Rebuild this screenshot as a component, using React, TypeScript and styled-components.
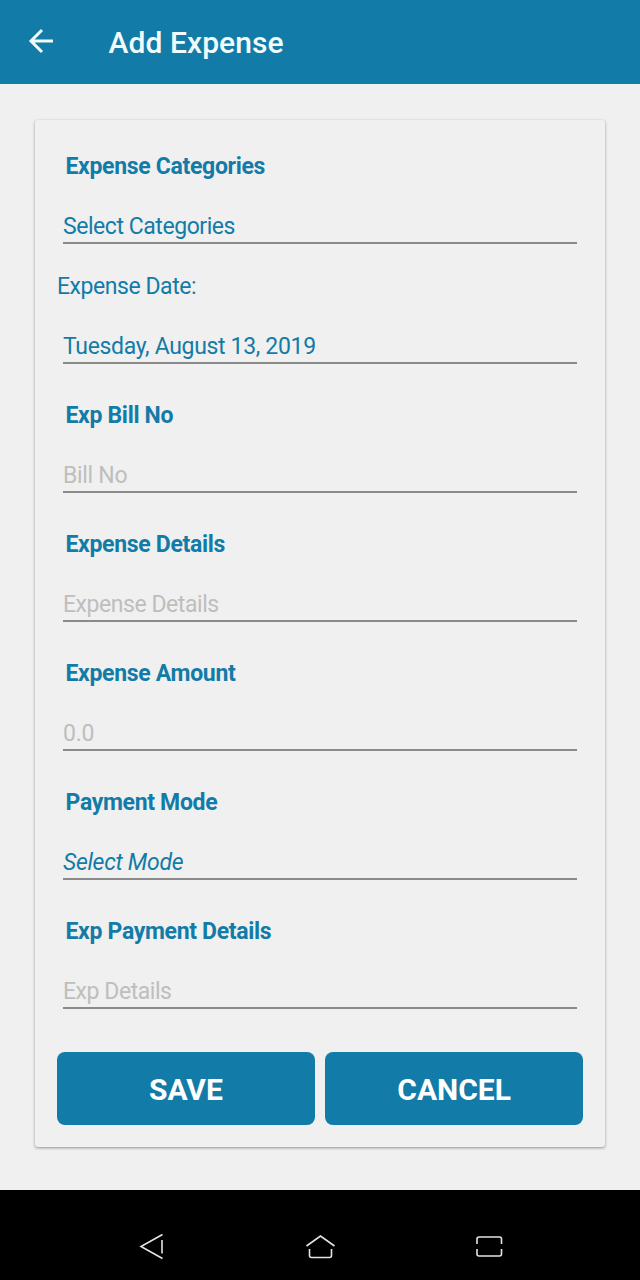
import React from 'react';
import styled, { createGlobalStyle } from 'styled-components';

const BLUE = '#137ba7';

const GlobalStyle = createGlobalStyle`
  * { box-sizing: border-box; }
  body { margin: 0; background: #f0f0f0; font-family: Roboto, sans-serif; }
`;

const Screen = styled.div`
  width: 640px;
  height: 1280px;
  display: flex;
  flex-direction: column;
  background: #f0f0f0;
  overflow: hidden;
`;

const AppBar = styled.header`
  height: 84px;
  flex: none;
  display: flex;
  align-items: center;
  padding: 0 0 0 28px;
  background: ${BLUE};
  color: #f1fbfd;
`;

const BackIcon = styled.svg`
  width: 26px;
  height: 26px;
  margin-top: -2px;
`;

const Title = styled.h1`
  margin: 2px 0 0 54.5px;
  font-size: 30px;
  line-height: 36px;
  font-weight: 500;
  letter-spacing: 0.08px;
`;

const Content = styled.main`
  flex: 1;
  padding: 36px 35px 0;
`;

const Card = styled.form`
  height: 1027px;
  padding: 0 22px;
  border-radius: 3px;
  background: #f0f0f0;
  box-shadow: 0 1px 3px rgba(0, 0, 0, 0.4);
  display: flex;
  flex-direction: column;
`;

const Field = styled.div<{ $compact?: boolean }>`
  height: ${(p) => (p.$compact ? 120 : 129)}px;
  flex: none;
  display: flex;
  flex-direction: column;
  justify-content: flex-end;
  padding: 0 6px 5px;
`;

const Label = styled.label<{ $plain?: boolean }>`
  margin: ${(p) => (p.$plain ? '0 0 33px -6px' : '0 0 33px 2.5px')};
  font-size: 23px;
  line-height: 27px;
  letter-spacing: ${(p) => (p.$plain ? -0.45 : -0.32)}px;
  font-weight: ${(p) => (p.$plain ? 400 : 700)};
  color: ${BLUE};
`;

const Value = styled.div<{ $hint?: boolean; $italic?: boolean; $tracking?: number }>`
  height: 31px;
  border-bottom: 2px solid #8a8a8a;
  font-size: 23px;
  line-height: 27px;
  letter-spacing: ${(p) => p.$tracking ?? -0.45}px;
  font-style: ${(p) => (p.$italic ? 'italic' : 'normal')};
  color: ${(p) => (p.$hint ? '#bebebe' : BLUE)};
`;

const Actions = styled.div`
  display: flex;
  gap: 10.5px;
  margin-top: 38px;
`;

const Button = styled.button`
  flex: 1;
  height: 73px;
  padding: 2px 0 0;
  border: 0;
  border-radius: 8px;
  background: ${BLUE};
  color: #fff;
  font: 700 30px Roboto, sans-serif;
`;

const NavBar = styled.nav`
  height: 90px;
  flex: none;
  background: #000;
`;

const NavIcons = styled.svg`
  display: block;
  width: 640px;
  height: 90px;
  fill: none;
  stroke: #e4e4e4;
  stroke-width: 1.6;
`;

interface FieldData {
  label: string;
  value: string;
  plain?: boolean;
  hint?: boolean;
  italic?: boolean;
  tracking?: number;
}

const fields: FieldData[] = [
  { label: 'Expense Categories', value: 'Select Categories' },
  { label: 'Expense Date:', value: 'Tuesday, August 13, 2019', plain: true, tracking: -0.33 },
  { label: 'Exp Bill No', value: 'Bill No', hint: true, tracking: -0.3 },
  { label: 'Expense Details', value: 'Expense Details', hint: true },
  { label: 'Expense Amount', value: '0.0', hint: true, tracking: -0.2 },
  { label: 'Payment Mode', value: 'Select Mode', italic: true, tracking: -0.3 },
  { label: 'Exp Payment Details', value: 'Exp Details', hint: true },
];

export default function App() {
  return (
    <Screen>
      <GlobalStyle />
      <AppBar>
        <BackIcon viewBox="0 0 26 26" fill="none" stroke="currentColor" strokeWidth="3">
          <path d="M25 13H3M14 2L3 13L14 24" />
        </BackIcon>
        <Title>Add Expense</Title>
      </AppBar>
      <Content>
        <Card>
          {fields.map((f) => (
            <Field key={f.label} $compact={f.plain}>
              <Label $plain={f.plain}>{f.label}</Label>
              <Value $hint={f.hint} $italic={f.italic} $tracking={f.tracking}>{f.value}</Value>
            </Field>
          ))}
          <Actions>
            <Button type="button">SAVE</Button>
            <Button type="button">CANCEL</Button>
          </Actions>
        </Card>
      </Content>
      <NavBar>
        <NavIcons viewBox="0 0 640 90">
          <path d="M162.5 44.5L141 56.5L162.5 68.5M162 50V63.5" />
          <path d="M306.5 56L320.5 46L334.500 56M309.500 59V65.500Q309.500 67.500 311.500 67.500H329.500Q331.500 67.500 331.500 65.500V59" />
          <path d="M477 54V49Q477 47 479 47H499.500Q501.500 47 501.500 49V54M477 59V64Q477 66 479 66H499.500Q501.500 66 501.500 64V59" />
        </NavIcons>
      </NavBar>
    </Screen>
  );
}
